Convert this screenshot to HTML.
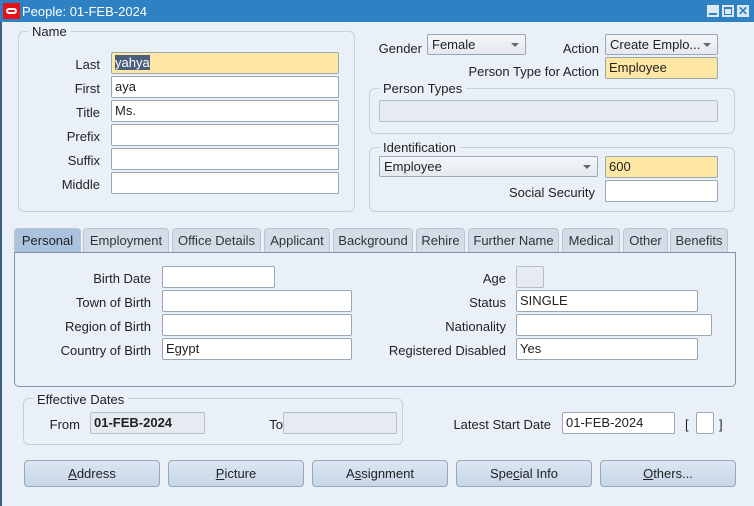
<!DOCTYPE html>
<html><head><style>
*{margin:0;padding:0;box-sizing:border-box}
body{width:754px;height:506px;background:#eaf0f7;font-family:"Liberation Sans",Arial,sans-serif;font-size:13px;color:#222;position:relative;overflow:hidden}
.a{position:absolute}
.tb{left:0;top:0;width:754px;height:22px;background:#2e82c4;color:#fff;font-size:13px}
.grp{position:absolute;border:1px solid #c6d0db;border-radius:6px}
.gl{position:absolute;background:#eaf0f7;padding:0 4px;font-size:13px;color:#222}
.f{position:absolute;height:22px;background:#fff;border:1px solid #9aa7b5;border-radius:2px;padding-left:3px;line-height:20px;font-size:13px}
.y{background:#fde7a3}
.g{background:#e6ebf1;border-color:#b5bfcb}
.l{position:absolute;text-align:right;font-size:13px}
.sel{position:absolute;height:21px;background:linear-gradient(#f4f6f9,#e4e9ef);border:1px solid #9aa7b5;border-radius:2px;padding-left:4px;line-height:19px}
.sel:after{content:"";position:absolute;right:6px;top:8px;border:4px solid transparent;border-top:4px solid #666;border-bottom:0}
.tab{position:absolute;top:228px;height:24px;background:#d3dde8;border:1px solid #b8c5d3;border-bottom:none;border-radius:4px 4px 0 0;text-align:center;line-height:24px;font-size:13px;color:#333}
.btn{position:absolute;top:460px;height:27px;width:136px;background:linear-gradient(#dbe6f1,#c7d7e8);border:1px solid #97aabf;border-radius:4px;text-align:center;line-height:25px;font-size:13px}
</style></head><body>
<div class="a" style="left:0;top:0;width:2px;height:506px;background:#3d5f85"></div>
<div class="a tb">
<div class="a" style="left:3px;top:3px;width:17px;height:16px;background:#e8111a"><div class="a" style="left:3px;top:5px;width:11px;height:6px;border:2px solid #fff;border-radius:4px"></div></div>
<div class="a" style="left:22px;top:4px">People: 01-FEB-2024</div>
<div class="a" style="left:707px;top:5px;width:12px;height:12px;background:#dde8f3"><div class="a" style="left:2px;top:8px;width:8px;height:2px;background:#2e82c4"></div></div>
<div class="a" style="left:722px;top:5px;width:12px;height:12px;background:#dde8f3"><div class="a" style="left:2px;top:2px;width:8px;height:8px;border:1px solid #2e82c4;border-top-width:2px"></div></div>
<div class="a" style="left:737px;top:5px;width:12px;height:12px;background:#dde8f3;color:#2e82c4;font-size:12px;line-height:12px;text-align:center;font-weight:bold">✕</div>
</div>

<div class="grp" style="left:18px;top:31px;width:337px;height:181px"></div>
<div class="gl" style="left:28px;top:24px">Name</div>
<div class="l" style="left:40px;top:57px;width:60px">Last</div>
<div class="f y" style="left:111px;top:52px;width:228px"><span style="background:#4b5f7d;color:#fff">yahya</span></div>
<div class="l" style="left:40px;top:81px;width:60px">First</div>
<div class="f" style="left:111px;top:76px;width:228px">aya</div>
<div class="l" style="left:40px;top:105px;width:60px">Title</div>
<div class="f" style="left:111px;top:100px;width:228px">Ms.</div>
<div class="l" style="left:40px;top:129px;width:60px">Prefix</div>
<div class="f" style="left:111px;top:124px;width:228px"></div>
<div class="l" style="left:40px;top:153px;width:60px">Suffix</div>
<div class="f" style="left:111px;top:148px;width:228px"></div>
<div class="l" style="left:40px;top:177px;width:60px">Middle</div>
<div class="f" style="left:111px;top:172px;width:228px"></div>

<div class="l" style="left:370px;top:41px;width:52px">Gender</div>
<div class="sel" style="left:427px;top:34px;width:99px">Female</div>
<div class="l" style="left:540px;top:41px;width:59px">Action</div>
<div class="sel" style="left:605px;top:34px;width:113px">Create Emplo...</div>
<div class="l" style="left:440px;top:64px;width:159px">Person Type for Action</div>
<div class="f y" style="left:605px;top:57px;width:113px">Employee</div>

<div class="grp" style="left:369px;top:88px;width:366px;height:46px"></div>
<div class="gl" style="left:379px;top:81px">Person Types</div>
<div class="f g" style="left:379px;top:100px;width:339px"></div>

<div class="grp" style="left:369px;top:147px;width:366px;height:65px"></div>
<div class="gl" style="left:379px;top:140px">Identification</div>
<div class="sel" style="left:379px;top:156px;width:219px">Employee</div>
<div class="f y" style="left:605px;top:156px;width:113px">600</div>
<div class="l" style="left:440px;top:185px;width:155px">Social Security</div>
<div class="f" style="left:605px;top:180px;width:113px"></div>

<div class="tab" style="left:14px;width:67px;background:#a9c3de;color:#222;height:25px">Personal</div>
<div class="tab" style="left:83px;width:86px">Employment</div>
<div class="tab" style="left:172px;width:89px">Office Details</div>
<div class="tab" style="left:264px;width:66px">Applicant</div>
<div class="tab" style="left:333px;width:80px">Background</div>
<div class="tab" style="left:416px;width:49px">Rehire</div>
<div class="tab" style="left:468px;width:91px">Further Name</div>
<div class="tab" style="left:562px;width:58px">Medical</div>
<div class="tab" style="left:623px;width:45px">Other</div>
<div class="tab" style="left:670px;width:58px">Benefits</div>
<div class="a" style="left:14px;top:252px;width:722px;height:135px;border:1px solid #7f93aa;border-radius:0 0 5px 5px"></div>

<div class="l" style="left:40px;top:271px;width:111px">Birth Date</div>
<div class="f" style="left:162px;top:266px;width:113px"></div>
<div class="l" style="left:40px;top:295px;width:111px">Town of Birth</div>
<div class="f" style="left:162px;top:290px;width:190px"></div>
<div class="l" style="left:40px;top:319px;width:111px">Region of Birth</div>
<div class="f" style="left:162px;top:314px;width:190px"></div>
<div class="l" style="left:40px;top:343px;width:111px">Country of Birth</div>
<div class="f" style="left:162px;top:338px;width:190px">Egypt</div>

<div class="l" style="left:380px;top:271px;width:126px">Age</div>
<div class="f g" style="left:516px;top:266px;width:28px"></div>
<div class="l" style="left:380px;top:295px;width:126px">Status</div>
<div class="f" style="left:516px;top:290px;width:182px">SINGLE</div>
<div class="l" style="left:380px;top:319px;width:126px">Nationality</div>
<div class="f" style="left:516px;top:314px;width:196px"></div>
<div class="l" style="left:360px;top:343px;width:146px">Registered Disabled</div>
<div class="f" style="left:516px;top:338px;width:182px">Yes</div>

<div class="grp" style="left:23px;top:398px;width:380px;height:47px"></div>
<div class="gl" style="left:33px;top:392px">Effective Dates</div>
<div class="l" style="left:40px;top:417px;width:40px">From</div>
<div class="f g" style="left:90px;top:412px;width:115px;font-weight:bold">01-FEB-2024</div>
<div class="l" style="left:260px;top:417px;width:23px">To</div>
<div class="f g" style="left:283px;top:412px;width:114px"></div>
<div class="l" style="left:420px;top:417px;width:131px">Latest Start Date</div>
<div class="f" style="left:562px;top:412px;width:113px">01-FEB-2024</div>
<div class="a" style="left:685px;top:417px">[</div>
<div class="f" style="left:696px;top:412px;width:18px"></div>
<div class="a" style="left:719px;top:417px">]</div>

<div class="btn" style="left:24px"><u>A</u>ddress</div>
<div class="btn" style="left:168px"><u>P</u>icture</div>
<div class="btn" style="left:312px">A<u>s</u>signment</div>
<div class="btn" style="left:456px">Spe<u>c</u>ial Info</div>
<div class="btn" style="left:600px"><u>O</u>thers...</div>
</body></html>
